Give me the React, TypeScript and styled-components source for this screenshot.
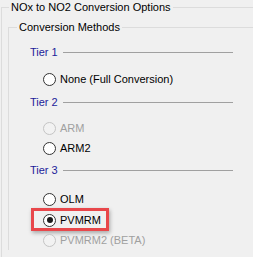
import * as React from "react";
import styled, { createGlobalStyle } from "styled-components";

const GlobalStyle = createGlobalStyle`
    html, body {
        margin: 0;
        padding: 0;
        background: #f0f0f0;
    }
    body {
        width: 253px;
        height: 257px;
        overflow: hidden;
        font-family: "Liberation Sans", Arial, sans-serif;
        font-size: 11px;
        color: #000;
    }
`;

// a classic win32 style group box, only top + left edges are visible in the crop
const GroupBox = styled.fieldset<{ $inset: number }>`
    margin: ${p => (p.$inset ? "6px 0 0 0" : "0 0 0 1px")};
    padding: 0 0 0 ${p => (p.$inset ? 0 : 6)}px;
    border: none;
    border-top: 1px solid #dcdcdc;
    border-left: 1px solid #dcdcdc;
    min-inline-size: 0;
    height: ${p => (p.$inset ? 230 : 260)}px;
    box-sizing: border-box;
`;

const Legend = styled.legend<{ $shift: number }>`
    margin-left: ${p => p.$shift}px;
    padding: 0 2px;
    line-height: 14px;
    color: #000;
`;

const Content = styled.div`
    display: flex;
    flex-direction: column;
    padding-left: 21px;
`;

const TierHeader = styled.div<{ $top: number }>`
    display: flex;
    align-items: center;
    height: 16px;
    margin-top: ${p => p.$top}px;
    margin-right: 20px;
    color: #1c1c9a;
`;

const TierRule = styled.div`
    flex: 1;
    height: 1px;
    margin-left: 5px;
    background: #a0a0a0;
`;

const OptionRow = styled.label<{ $top: number, $disabled: boolean }>`
    position: relative;
    display: flex;
    align-items: center;
    height: 20px;
    margin-top: ${p => p.$top}px;
    margin-left: 13px;
    color: ${p => (p.$disabled ? "#a0a0a0" : "#000")};
`;

const RadioDot = styled.span<{ $checked: boolean, $disabled: boolean }>`
    width: 13px;
    height: 13px;
    box-sizing: border-box;
    border-radius: 50%;
    border: 1px solid ${p => (p.$disabled ? "#c4c4c4" : "#333")};
    background: ${p => (p.$disabled ? "#f2f2f2" : "#fff")};
    margin-right: 4px;
    display: flex;
    align-items: center;
    justify-content: center;
    &::after {
        content: "";
        display: ${p => (p.$checked ? "block" : "none")};
        width: 6px;
        height: 6px;
        border-radius: 50%;
        background: #1a1a1a;
    }
`;

// red annotation frame drawn over the selected option
const Highlight = styled.span`
    position: absolute;
    left: -12px;
    top: -2px;
    width: 78px;
    height: 23px;
    box-sizing: border-box;
    border: 3px solid #e8474b;
    box-shadow: 1px 2px 4px rgba(0, 0, 0, 0.3);
    pointer-events: none;
`;

interface OptionProps {
    label: string,
    top: number,
    checked?: boolean,
    disabled?: boolean,
    marked?: boolean,
}

const Option: React.FC<OptionProps> = ({ label, top, checked = false, disabled = false, marked = false }) => (
    <OptionRow $top={top} $disabled={disabled}>
        <RadioDot $checked={checked} $disabled={disabled}/>
        {label}
        {marked && <Highlight/>}
    </OptionRow>
);

const Tier: React.FC<{ title: string, top: number }> = ({ title, top }) => (
    <TierHeader $top={top}>
        {title}
        <TierRule/>
    </TierHeader>
);

export default function App() {
    return (
        <React.Fragment>
            <GlobalStyle/>
            <GroupBox $inset={0}>
                <Legend $shift={1}>NOx to NO2 Conversion Options</Legend>
                <GroupBox $inset={1}>
                    <Legend $shift={8}>Conversion Methods</Legend>
                    <Content>
                        <Tier title="Tier 1" top={10}/>
                        <Option label="None (Full Conversion)" top={9}/>
                        <Tier title="Tier 2" top={5}/>
                        <Option label="ARM" top={8} disabled/>
                        <Option label="ARM2" top={0}/>
                        <Tier title="Tier 3" top={4}/>
                        <Option label="OLM" top={11}/>
                        <Option label="PVMRM" top={1} checked marked/>
                        <Option label="PVMRM2 (BETA)" top={0} disabled/>
                    </Content>
                </GroupBox>
            </GroupBox>
        </React.Fragment>
    );
}
